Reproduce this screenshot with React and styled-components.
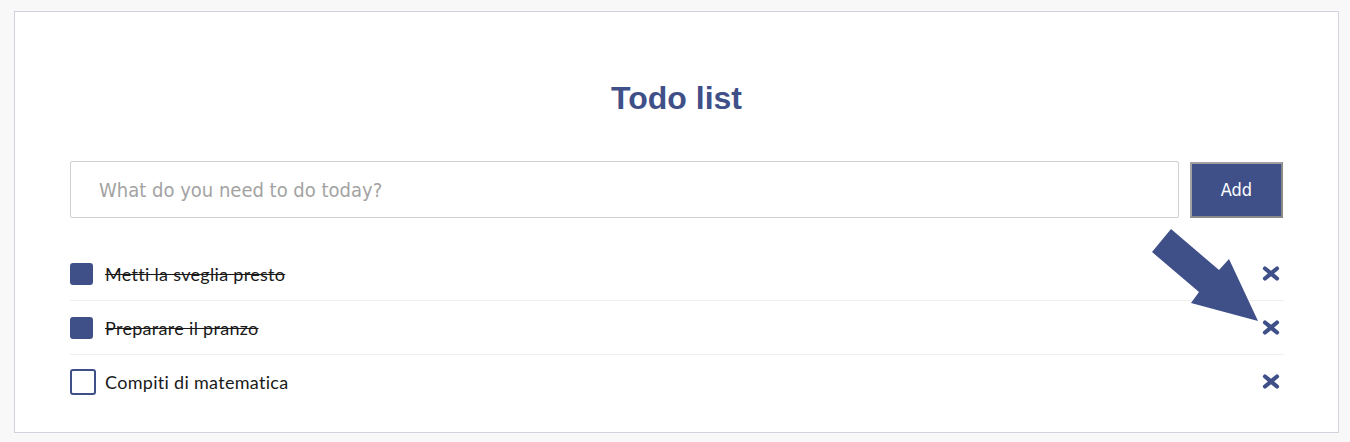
import React from "react";
import styled, { createGlobalStyle } from "styled-components";

const GlobalStyle = createGlobalStyle`
  html, body { margin: 0; padding: 0; background: #f8f8f8; }
  body { font-family: "Liberation Sans", Arial, sans-serif; }
  * { box-sizing: border-box; }
`;

const Page = styled.div`
  padding: 11px 11px 9px 14px;
`;

const Card = styled.main`
  position: relative;
  background: #ffffff;
  border: 1px solid #d3d0e0;
  height: 422px;
  padding: 68px 55px 24px 55px;
`;

const Title = styled.h1`
  margin: 0 0 44px;
  text-align: center;
  font-family: "Liberation Sans", Arial, sans-serif;
  font-weight: 700;
  font-size: 32px;
  line-height: 37px;
  color: #3f5089;
`;

const Form = styled.form`
  display: flex;
  align-items: center;
  gap: 11px;
`;

const Input = styled.input`
  flex: 1;
  height: 57px;
  border: 1px solid #cfcfd4;
  border-radius: 2px;
  padding: 0 28px;
  font-family: "DejaVu Sans Condensed", "DejaVu Sans", sans-serif;
  font-size: 20px;
  color: #333;
  outline: none;
  &::placeholder { color: #a3a3a3; }
`;

const AddButton = styled.button`
  width: 93px;
  height: 56px;
  background: #3f5089;
  color: #ffffff;
  border: 2px solid #a2a2a2;
  border-bottom-color: #8a8a8a;
  border-right-color: #8a8a8a;
  font-family: "DejaVu Sans Condensed", "DejaVu Sans", sans-serif;
  font-size: 18px;
  cursor: pointer;
`;

const List = styled.ul`
  list-style: none;
  margin: 29px 0 0;
  padding: 0;
  width: 1214px;
`;

const Row = styled.li`
  display: flex;
  align-items: center;
  height: 54px;
  border-bottom: 1px solid ${(p) => (p.$last ? "transparent" : "#efefef")};
`;

const Check = styled.span`
  flex: none;
  width: ${(p) => (p.$done ? "23px" : "26px")};
  height: ${(p) => (p.$done ? "22px" : "26px")};
  margin-right: ${(p) => (p.$done ? "12px" : "9px")};
  border-radius: 3px;
  background: ${(p) => (p.$done ? "#3f5089" : "#fff")};
  border: ${(p) => (p.$done ? "none" : "2px solid #3f5089")};
`;

const Label = styled.span`
  flex: 1;
  font-family: Lato, "Open Sans", sans-serif;
  font-size: 18px;
  letter-spacing: 0.3px;
  color: #1a1a1a;
  text-decoration: ${(p) => (p.$done ? "line-through" : "none")};
`;

const Remove = styled.button`
  flex: none;
  background: none;
  border: none;
  padding: 0;
  margin-right: 3px;
  width: 20px;
  height: 18px;
  display: flex;
  align-items: center;
  justify-content: center;
  cursor: pointer;
`;

const Arrow = styled.svg`
  position: absolute;
  left: 1125px;
  top: 208px;
  width: 130px;
  height: 110px;
  pointer-events: none;
`;

const Cross = () => (
  <svg width="20" height="17" viewBox="0 0 20 17">
    <path
      d="M4 3.5 L16 13.5 M16 3.5 L4 13.5"
      stroke="#3f5089"
      strokeWidth="4.2"
      strokeLinecap="round"
      fill="none"
    />
  </svg>
);

const todos = [
  { text: "Metti la sveglia presto", done: true },
  { text: "Preparare il pranzo", done: true },
  { text: "Compiti di matematica", done: false },
];

export default function App() {
  return (
    <>
      <GlobalStyle />
      <Page>
        <Card>
          <Title>Todo list</Title>
          <Form onSubmit={(e) => e.preventDefault()}>
            <Input placeholder="What do you need to do today?" />
            <AddButton type="submit">Add</AddButton>
          </Form>
          <List>
            {todos.map((t, i) => (
              <Row key={t.text} $last={i === todos.length - 1}>
                <Check $done={t.done} />
                <Label $done={t.done}>{t.text}</Label>
                <Remove aria-label="remove">
                  <Cross />
                </Remove>
              </Row>
            ))}
          </List>
          <Arrow viewBox="1140 220 130 110">
            <polygon
              points="1152,252 1171,229 1219,270 1229,259 1258,321 1191,303 1199,292"
              fill="#3f5089"
            />
          </Arrow>
        </Card>
      </Page>
    </>
  );
}
